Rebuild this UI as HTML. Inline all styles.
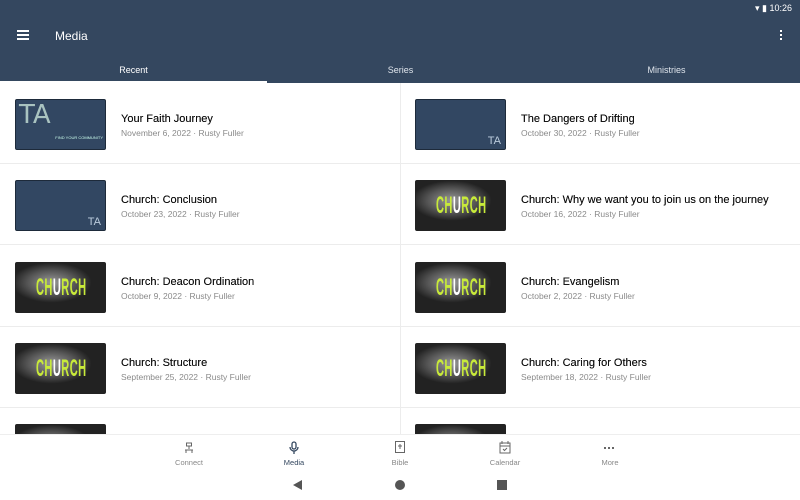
<!DOCTYPE html><html><head><style>
*{margin:0;padding:0;box-sizing:border-box}
body{width:800px;height:500px;overflow:hidden;background:#fff;font-family:"Liberation Sans",Roboto,sans-serif;position:relative}
.hdr{position:absolute;left:0;top:0;width:800px;height:83px;background:#34475f;color:#fff}
.tab{position:absolute;top:65px;font-size:9px;color:#dfe5ec;width:267px;text-align:center}
.row{position:absolute;height:81px;border-bottom:1px solid #ececec}
.th{position:absolute;left:15px;top:16px;width:91px;height:51px;border-radius:2px;overflow:hidden}
.blue{background:#324762;border:1px solid #1d2a3a}
.ch{background:radial-gradient(ellipse 40px 20px at 40% 40%,#9a9a9a,#555 60%,#222);border:1px solid #222}
.ch span{position:absolute;left:20px;top:12px;font:bold 24px/26px "Liberation Sans Narrow","Liberation Sans",sans-serif;color:#c8ea3a;transform:scaleX(0.46);transform-origin:0 0;letter-spacing:1px;white-space:nowrap}
.ch b{color:#fff}
.t{position:absolute;left:121px;top:30px;font-size:11px;color:#111;text-shadow:0 0 0.3px #111}
.s{position:absolute;left:121px;top:45px;font-size:8.5px;color:#8a8a8a}
.nav{position:absolute;top:434px;left:0;width:800px;height:66px;border-top:1px solid #eee;background:#fff;z-index:5}
.ni{position:absolute;top:23px;font-size:7.5px;color:#888;width:60px;text-align:center}
.sys{z-index:6}
</style></head><body>
<div class="hdr">
<div style="position:absolute;right:8px;top:3px;font-size:9px">▾ ▮ 10:26</div>
<div style="position:absolute;left:17px;top:30px;width:12px;height:2px;background:#fff;box-shadow:0 4px 0 #fff,0 8px 0 #fff"></div>
<div style="position:absolute;left:55px;top:29px;font-size:12px">Media</div>
<div style="position:absolute;left:780px;top:30px;width:2px;height:2px;background:#fff;box-shadow:0 4px 0 #fff,0 8px 0 #fff"></div>
<div class="tab" style="left:0;color:#fff">Recent</div>
<div class="tab" style="left:267px">Series</div>
<div class="tab" style="left:533px">Ministries</div>
<div style="position:absolute;left:0;top:81px;width:267px;height:2px;background:#fff"></div>
</div>
<div style="position:absolute;left:400px;top:83px;width:1px;height:352px;background:#ececec"></div>

<div class="row" style="left:0;top:83px;width:400px"><div class="th blue"><span style="position:absolute;left:3px;top:0;color:#a9c3c0;font-size:26px;font-family:'DejaVu Sans'">TA</span><span style="position:absolute;right:2px;top:35px;color:#cfe;font-size:4px">FIND YOUR COMMUNITY</span></div><div class="t">Your Faith Journey</div><div class="s">November 6, 2022 · Rusty Fuller</div></div>
<div class="row" style="left:400px;top:83px;width:400px"><div class="th blue"><span style="position:absolute;right:4px;bottom:2px;color:#bcd;font-size:11px">TA</span></div><div class="t">The Dangers of Drifting</div><div class="s">October 30, 2022 · Rusty Fuller</div></div>
<div class="row" style="left:0;top:164px;width:400px"><div class="th blue"><span style="position:absolute;right:4px;bottom:2px;color:#bcd;font-size:11px">TA</span></div><div class="t">Church: Conclusion</div><div class="s">October 23, 2022 · Rusty Fuller</div></div>
<div class="row" style="left:400px;top:164px;width:400px"><div class="th ch"><span>CH<b>U</b>RCH</span></div><div class="t">Church: Why we want you to join us on the journey</div><div class="s">October 16, 2022 · Rusty Fuller</div></div>
<div class="row" style="left:0;top:246px;width:400px"><div class="th ch"><span>CH<b>U</b>RCH</span></div><div class="t">Church: Deacon Ordination</div><div class="s">October 9, 2022 · Rusty Fuller</div></div>
<div class="row" style="left:400px;top:246px;width:400px"><div class="th ch"><span>CH<b>U</b>RCH</span></div><div class="t">Church: Evangelism</div><div class="s">October 2, 2022 · Rusty Fuller</div></div>
<div class="row" style="left:0;top:327px;width:400px"><div class="th ch"><span>CH<b>U</b>RCH</span></div><div class="t">Church: Structure</div><div class="s">September 25, 2022 · Rusty Fuller</div></div>
<div class="row" style="left:400px;top:327px;width:400px"><div class="th ch"><span>CH<b>U</b>RCH</span></div><div class="t">Church: Caring for Others</div><div class="s">September 18, 2022 · Rusty Fuller</div></div>
<div class="row" style="left:0;top:408px;width:400px;border:0"><div class="th ch"></div></div>
<div class="row" style="left:400px;top:408px;width:400px;border:0"><div class="th ch"></div></div>

<div class="nav">
<svg style="position:absolute;left:183px;top:7px" width="12" height="12" viewBox="0 0 12 12" fill="none" stroke="#666"><rect x="3.5" y="1" width="5" height="3"/><path d="M6 4v3M2 8h8M3 8v3M9 8v3"/></svg>
<div class="ni" style="left:159px">Connect</div>
<svg style="position:absolute;left:289px;top:6px" width="10" height="14" viewBox="0 0 10 14" fill="none" stroke="#34475f" stroke-width="1.3"><rect x="3" y="1" width="4" height="7" rx="2"/><path d="M1 6a4 4 0 0 0 8 0M5 10v3"/></svg>
<div class="ni" style="left:264px;color:#34475f">Media</div>
<svg style="position:absolute;left:394px;top:6px" width="12" height="13" viewBox="0 0 12 13" fill="none" stroke="#666"><rect x="1.5" y="0.5" width="9" height="11"/><path d="M6 3v5M4 5h4"/></svg>
<div class="ni" style="left:370px">Bible</div>
<svg style="position:absolute;left:499px;top:6px" width="12" height="13" viewBox="0 0 12 13" fill="none" stroke="#666"><rect x="1" y="2" width="10" height="10"/><path d="M1 5h10M3 0v3M9 0v3M4 8l1.5 1.5L8 7"/></svg>
<div class="ni" style="left:475px">Calendar</div>
<div style="position:absolute;left:604px;top:12px;width:2px;height:2px;background:#666;box-shadow:4px 0 0 #666,8px 0 0 #666"></div>
<div class="ni" style="left:580px">More</div>
</div>
<div class="sys" style="position:absolute;left:293px;top:480px;width:0;height:0;border-top:5px solid transparent;border-bottom:5px solid transparent;border-right:9px solid #555"></div>
<div class="sys" style="position:absolute;left:395px;top:480px;width:10px;height:10px;border-radius:50%;background:#555"></div>
<div class="sys" style="position:absolute;left:497px;top:480px;width:10px;height:10px;background:#555"></div>
</body></html>
